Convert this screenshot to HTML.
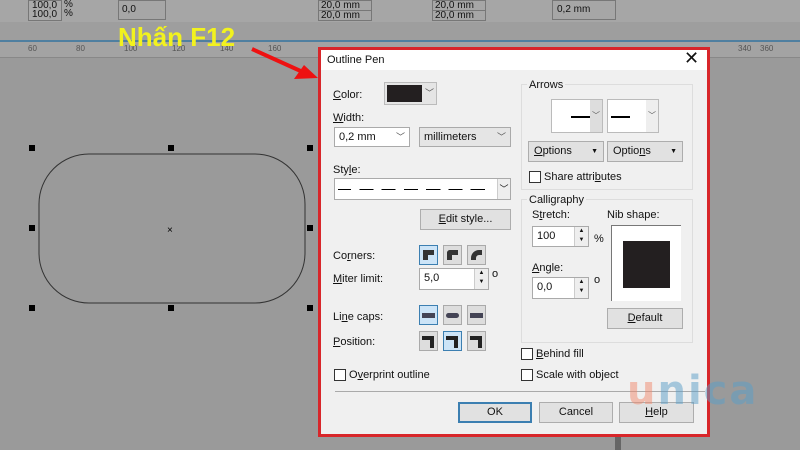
<!DOCTYPE html>
<html><head><meta charset="utf-8"><style>
*{margin:0;padding:0;box-sizing:border-box}
body{width:800px;height:450px;overflow:hidden;background:#9a9a9a;position:relative;font-family:"Liberation Sans",sans-serif;font-size:11px;color:#111}
.a{position:absolute}
.btn{position:absolute;background:#e1e1e1;border:1px solid #adadad;text-align:center;line-height:19px;font-size:11px}
.inp{position:absolute;background:#fff;border:1px solid #aaa;padding-left:4px;line-height:18px}
.cb{position:absolute;width:12px;height:12px;border:1px solid #333;background:#fff}
.ib{position:absolute;width:19px;height:20px;background:#ddd;border:1px solid #aaa}
.ib.s{background:#cce4f7;border-color:#3c7fb1}
.spin{position:absolute;right:0;top:0;width:14px;height:100%;border-left:1px solid #ccc;background:#eee;font-size:6px;text-align:center;line-height:9px}
.grp{position:absolute;border:1px solid #ddd}
u{text-decoration:underline}
</style></head><body>
<div class="a" style="left:0;top:0;width:800px;height:22px;background:#a6a6a6"></div>
<div class="a" style="left:28px;top:0;width:34px;height:21px;border:1px solid #777;background:#aaa;font-size:10px;line-height:9px;padding-left:3px">100,0<br>100,0</div>
<div class="a" style="left:64px;top:0;font-size:10px;line-height:9px">%<br>%</div>
<div class="a" style="left:118px;top:0;width:48px;height:20px;border:1px solid #777;font-size:10px;padding-left:3px;line-height:18px">0,0</div>
<div class="a" style="left:318px;top:0;width:54px;height:11px;border:1px solid #777;font-size:10px;line-height:9px;padding-left:2px">20,0 mm</div>
<div class="a" style="left:318px;top:10px;width:54px;height:11px;border:1px solid #777;font-size:10px;line-height:10px;padding-left:2px">20,0 mm</div>
<div class="a" style="left:432px;top:0;width:54px;height:11px;border:1px solid #777;font-size:10px;line-height:9px;padding-left:2px">20,0 mm</div>
<div class="a" style="left:432px;top:10px;width:54px;height:11px;border:1px solid #777;font-size:10px;line-height:10px;padding-left:2px">20,0 mm</div>
<div class="a" style="left:552px;top:0;width:64px;height:20px;border:1px solid #777;font-size:10px;line-height:18px;padding-left:4px">0,2 mm</div>
<div class="a" style="left:0;top:22px;width:800px;height:19px;background:#9e9e9e"></div>
<div class="a" style="left:0;top:40px;width:800px;height:2px;background:#4f7fa0"></div>
<div class="a" style="left:0;top:42px;width:800px;height:16px;background:#a3a3a3;border-bottom:1px solid #888;font-size:8px;color:#555">
<span class="a" style="left:28px;top:2px">60</span><span class="a" style="left:76px;top:2px">80</span><span class="a" style="left:124px;top:2px">100</span><span class="a" style="left:172px;top:2px">120</span><span class="a" style="left:220px;top:2px">140</span><span class="a" style="left:268px;top:2px">160</span><span class="a" style="left:738px;top:2px">340</span><span class="a" style="left:760px;top:2px">360</span></div>
<div class="a" style="left:118px;top:22px;font-size:26px;font-weight:bold;color:#f2f21e;line-height:30px">Nhấn F12</div>
<svg class="a" style="left:250px;top:45px" width="70" height="40"><line x1="2" y1="4" x2="55" y2="28" stroke="#e11" stroke-width="4"/><polygon points="68,33 44,34 54,20" fill="#e11"/></svg>
<svg class="a" style="left:0;top:140px" width="330" height="180">
<rect x="39" y="14" width="266" height="149" rx="50" fill="none" stroke="#333" stroke-width="1"/>
<g fill="#000"><rect x="29" y="5" width="6" height="6"/><rect x="168" y="5" width="6" height="6"/><rect x="307" y="5" width="6" height="6"/><rect x="29" y="85" width="6" height="6"/><rect x="307" y="85" width="6" height="6"/><rect x="29" y="165" width="6" height="6"/><rect x="168" y="165" width="6" height="6"/><rect x="307" y="165" width="6" height="6"/></g>
<text x="167" y="93" font-size="10" font-family="Liberation Sans">×</text>
</svg>
<div class="a" style="left:615px;top:436px;width:6px;height:14px;background:#666"></div>
<div class="a" style="left:318px;top:47px;width:392px;height:390px;border:3px solid #d8262a;background:#f0f0f0"></div>
<div class="a" style="left:321px;top:50px;width:386px;height:20px;background:#fff"></div>
<div class="a" style="left:327px;top:54px;font-size:11px">Outline Pen</div>
<div class="a" style="left:684px;top:48px;font-size:18px">✕</div>

<div class="a" style="left:333px;top:89px"><u>C</u>olor:</div>
<div class="a" style="left:384px;top:82px;width:53px;height:23px;border:1px solid #bbb;background:#e5e5e5"><div class="a" style="left:2px;top:2px;width:35px;height:17px;background:#231f20"></div><div class="a" style="left:40px;top:3px;font-size:9px;color:#555">﹀</div></div>
<div class="a" style="left:333px;top:112px"><u>W</u>idth:</div>
<div class="inp" style="left:334px;top:127px;width:76px;height:20px">0,2 mm<span class="a" style="right:4px;top:0;color:#555;font-size:9px">﹀</span></div>
<div class="a" style="left:419px;top:127px;width:92px;height:20px;background:#e5e5e5;border:1px solid #aaa;padding-left:4px;line-height:18px">millimeters<span class="a" style="right:4px;top:0;color:#555;font-size:9px">﹀</span></div>
<div class="a" style="left:333px;top:164px">Sty<u>l</u>e:</div>
<div class="inp" style="left:334px;top:178px;width:177px;height:22px"><div class="a" style="left:3px;top:10px;width:155px;border-top:1px dashed #000;border-image:repeating-linear-gradient(90deg,#000 0 14px,transparent 14px 22px) 1"></div><div class="spin" style="width:13px;font-size:9px;line-height:20px">﹀</div></div>
<div class="btn" style="left:420px;top:209px;width:91px;height:21px"><u>E</u>dit style...</div>

<div class="a" style="left:333px;top:250px">Co<u>r</u>ners:</div>
<div class="a" style="left:333px;top:273px"><u>M</u>iter limit:</div>
<div class="a" style="left:333px;top:311px">Li<u>n</u>e caps:</div>
<div class="a" style="left:333px;top:336px"><u>P</u>osition:</div>
<div class="ib s" style="left:419px;top:245px"><div class="a" style="left:3px;top:4px;width:11px;height:10px;border-left:5px solid #333;border-top:5px solid #333"></div></div>
<div class="ib" style="left:443px;top:245px"><div class="a" style="left:3px;top:4px;width:11px;height:10px;border-left:5px solid #333;border-top:5px solid #333;border-top-left-radius:3px"></div></div>
<div class="ib" style="left:467px;top:245px"><div class="a" style="left:3px;top:4px;width:11px;height:10px;border-left:5px solid #333;border-top:5px solid #333;border-top-left-radius:8px"></div></div>
<div class="inp" style="left:419px;top:268px;width:70px;height:22px">5,0<div class="spin">▲<br>▼</div></div>
<div class="a" style="left:492px;top:268px">o</div>
<div class="ib s" style="left:419px;top:305px"><div class="a" style="left:2px;top:7px;width:13px;height:5px;background:#445"></div></div>
<div class="ib" style="left:443px;top:305px"><div class="a" style="left:2px;top:7px;width:13px;height:5px;background:#445;border-radius:3px"></div></div>
<div class="ib" style="left:467px;top:305px"><div class="a" style="left:2px;top:7px;width:13px;height:5px;background:#445"></div></div>
<div class="ib" style="left:419px;top:331px"><div class="a" style="left:2px;top:4px;width:12px;height:12px;border-top:4px solid #222;border-right:4px solid #222"></div></div>
<div class="ib s" style="left:443px;top:331px"><div class="a" style="left:2px;top:4px;width:12px;height:12px;border-top:4px solid #222;border-right:4px solid #222"></div></div>
<div class="ib" style="left:467px;top:331px"><div class="a" style="left:2px;top:4px;width:12px;height:12px;border-top:4px solid #222;border-right:4px solid #222"></div></div>
<div class="cb" style="left:334px;top:369px"></div><div class="a" style="left:349px;top:369px">O<u>v</u>erprint outline</div>

<div class="grp" style="left:521px;top:84px;width:172px;height:106px"></div>
<div class="a" style="left:527px;top:79px;background:#f0f0f0;padding:0 2px">Arrows</div>
<div class="a" style="left:551px;top:99px;width:52px;height:34px;background:#fff;border:1px solid #bbb"><div class="a" style="left:19px;top:16px;width:19px;border-top:2px solid #000"></div><div class="a" style="right:0;top:0;width:12px;height:100%;background:#ddd;font-size:8px;color:#555;line-height:32px;text-align:center">﹀</div></div>
<div class="a" style="left:607px;top:99px;width:52px;height:34px;background:#fff;border:1px solid #bbb"><div class="a" style="left:3px;top:16px;width:19px;border-top:2px solid #000"></div><div class="a" style="right:0;top:0;width:12px;height:100%;background:#eee;font-size:8px;color:#555;line-height:32px;text-align:center">﹀</div></div>
<div class="btn" style="left:528px;top:141px;width:76px;height:21px;text-align:left;padding-left:5px"><u>O</u>ptions<span class="a" style="right:5px;font-size:7px">▼</span></div>
<div class="btn" style="left:607px;top:141px;width:76px;height:21px;text-align:left;padding-left:5px">Optio<u>n</u>s<span class="a" style="right:5px;font-size:7px">▼</span></div>
<div class="cb" style="left:529px;top:171px"></div><div class="a" style="left:544px;top:171px">Share attri<u>b</u>utes</div>

<div class="grp" style="left:521px;top:199px;width:172px;height:144px"></div>
<div class="a" style="left:527px;top:194px;background:#f0f0f0;padding:0 2px">Calligraphy</div>
<div class="a" style="left:532px;top:209px">S<u>t</u>retch:</div>
<div class="inp" style="left:532px;top:226px;width:57px;height:21px">100<div class="spin">▲<br>▼</div></div>
<div class="a" style="left:594px;top:233px">%</div>
<div class="a" style="left:607px;top:209px">Nib shape:</div>
<div class="a" style="left:611px;top:225px;width:70px;height:76px;background:#fff;border-left:1px solid #777;border-top:1px solid #777"><div class="a" style="left:11px;top:15px;width:47px;height:47px;background:#231f20"></div></div>
<div class="a" style="left:532px;top:262px"><u>A</u>ngle:</div>
<div class="inp" style="left:532px;top:277px;width:57px;height:22px">0,0<div class="spin">▲<br>▼</div></div>
<div class="a" style="left:594px;top:274px">o</div>
<div class="btn" style="left:607px;top:308px;width:76px;height:21px"><u>D</u>efault</div>

<div class="cb" style="left:521px;top:348px"></div><div class="a" style="left:536px;top:348px"><u>B</u>ehind fill</div>
<div class="cb" style="left:521px;top:369px"></div><div class="a" style="left:536px;top:369px">Scale with object</div>
<div class="a" style="left:335px;top:391px;width:370px;border-top:1px solid #aaa"></div>
<div class="btn" style="left:458px;top:402px;width:74px;height:21px;border:2px solid #3c7fb1;line-height:17px">OK</div>
<div class="btn" style="left:539px;top:402px;width:74px;height:21px">Cancel</div>
<div class="btn" style="left:619px;top:402px;width:75px;height:21px"><u>H</u>elp</div>
<div class="a" style="left:627px;top:366px;font-size:40px;line-height:50px;font-weight:bold;letter-spacing:2px;opacity:.5;font-family:'DejaVu Sans',sans-serif"><span style="color:#f08a6e">u</span><span style="color:#5a9ec8">nica</span></div>
</body></html>
